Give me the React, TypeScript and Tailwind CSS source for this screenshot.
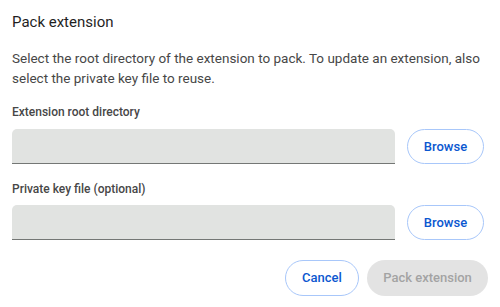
export default function App() {
  return (
    <div className="w-[500px] h-[307px] bg-white px-3 pt-3 font-['Roboto',sans-serif] overflow-hidden">
      {/* Title */}
      <h1 className="text-[15px] leading-5 text-[#1f1f1f]">Pack extension</h1>

      {/* Description */}
      <p className="mt-4 text-[13.5px] leading-5 text-[#474747]">
        Select the root directory of the extension to pack. To update an extension, also
        <br />
        select the private key file to reuse.
      </p>

      {/* Root directory */}
      <div className="mt-4 text-[12px] leading-4 font-medium text-[#474747]">Extension root directory</div>
      <div className="mt-[9px] flex items-stretch gap-3 pr-1 h-[35px]">
        <div className="flex-1 rounded-t-[5px] bg-[#e1e3e1] border-b border-[#747775]" />
        <button className="w-[77px] rounded-full border border-[#a8c7fa] bg-white text-[13px] font-medium text-[#0b57d0]">
          Browse
        </button>
      </div>

      {/* Private key */}
      <div className="mt-[17px] text-[12px] leading-4 font-medium text-[#474747]">Private key file (optional)</div>
      <div className="mt-2 flex items-stretch gap-3 pr-1 h-[35px]">
        <div className="flex-1 rounded-t-[5px] bg-[#e1e3e1] border-b border-[#747775]" />
        <button className="w-[77px] rounded-full border border-[#a8c7fa] bg-white text-[13px] font-medium text-[#0b57d0]">
          Browse
        </button>
      </div>

      {/* Actions */}
      <div className="mt-5 flex justify-end gap-2 h-[36px]">
        <button className="w-[74px] rounded-full border border-[#a8c7fa] bg-white text-[13px] font-medium text-[#0b57d0]">
          Cancel
        </button>
        <button className="w-[121px] rounded-full bg-[#e3e3e3] text-[13px] font-medium text-[#a3a3a3]">
          Pack extension
        </button>
      </div>
    </div>
  )
}
